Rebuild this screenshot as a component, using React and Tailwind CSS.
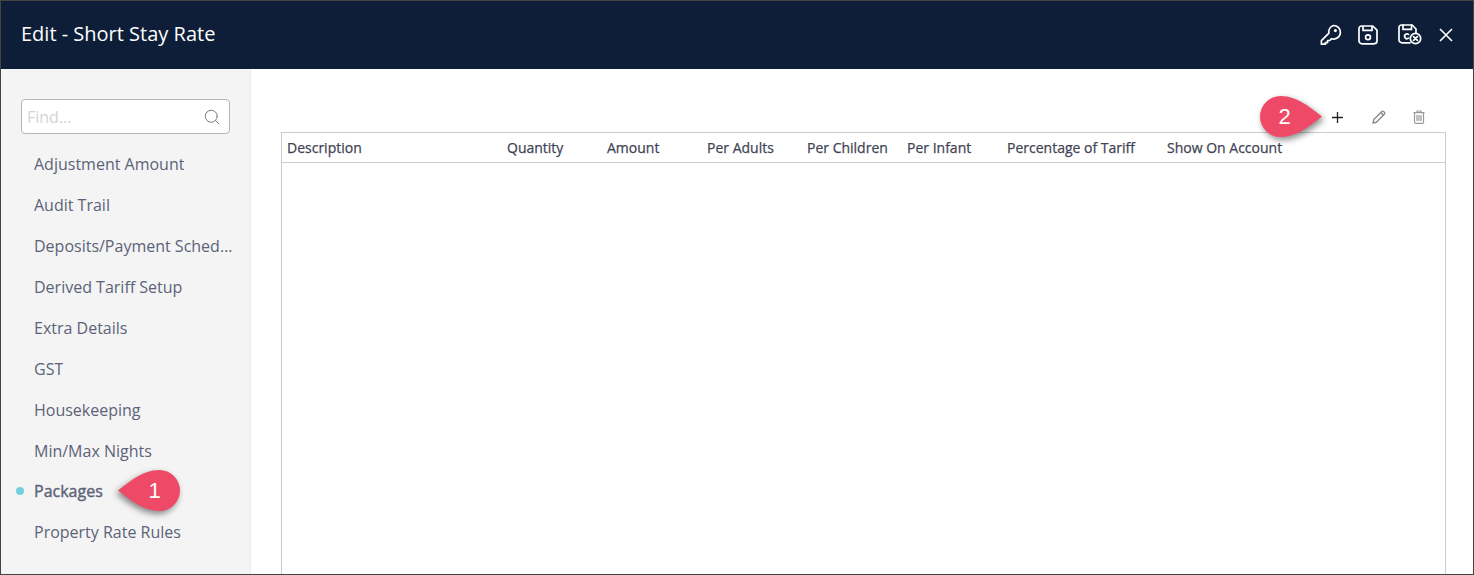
import React from 'react';
import { Search } from 'lucide-react';

const menuItems = [
  'Adjustment Amount',
  'Audit Trail',
  'Deposits/Payment Schedule',
  'Derived Tariff Setup',
  'Extra Details',
  'GST',
  'Housekeeping',
  'Min/Max Nights',
  'Packages',
  'Property Rate Rules',
];

const columns = [
  { label: 'Description', width: 'w-[220px]' },
  { label: 'Quantity', width: 'w-[100px]' },
  { label: 'Amount', width: 'w-[100px]' },
  { label: 'Per Adults', width: 'w-[100px]' },
  { label: 'Per Children', width: 'w-[100px]' },
  { label: 'Per Infant', width: 'w-[100px]' },
  { label: 'Percentage of Tariff', width: 'w-[160px]' },
  { label: 'Show On Account', width: 'w-[200px]' },
];

const KeyIcon = () => (
  <svg width="22" height="22" viewBox="0 0 22 22" fill="none" stroke="currentColor" strokeWidth="1.7" strokeLinejoin="round" strokeLinecap="round">
    <path d="M13.5 1.5a6.8 6.8 0 0 1 6.9 6.8 6.8 6.8 0 0 1-8.9 6.4l-1.7 1.8H7.6v2.1H5.4v1.6H1.4v-3.6l7.5-7.5a6.8 6.8 0 0 1 4.6-7.6z" />
    <circle cx="15.4" cy="6.6" r="0.7" />
  </svg>
);

const SaveIcon = () => (
  <svg width="20" height="20" viewBox="0 0 20 20" fill="none" stroke="currentColor" strokeWidth="1.7" strokeLinejoin="round">
    <path d="M3.5 1h11.2L19 5.2v10.6a3 3 0 0 1-3 3H4a3 3 0 0 1-3-3V3.5A2.5 2.5 0 0 1 3.5 1z" />
    <path d="M5 1v4.4h9V1" />
    <circle cx="10" cy="12.3" r="2.4" />
  </svg>
);

const SaveCloseIcon = () => (
  <svg width="24" height="22" viewBox="0 0 24 22" fill="none" stroke="currentColor" strokeWidth="1.7" strokeLinejoin="round" strokeLinecap="round">
    <path d="M12 18.8H4a3 3 0 0 1-3-3V3.5A2.5 2.5 0 0 1 3.5 1h10.7L18 5v3.5" />
    <path d="M5 1v4.4h8.5V1" />
    <path d="M10.5 10.4a2.4 2.4 0 1 0 0 3.8" />
    <circle cx="17.5" cy="14.5" r="5.2" />
    <path d="M15.6 12.6l3.8 3.8M19.4 12.6l-3.8 3.8" />
  </svg>
);

const CloseIcon = () => (
  <svg width="14" height="14" viewBox="0 0 14 14" fill="none" stroke="currentColor" strokeWidth="1.6">
    <path d="M1 1l12 12M13 1L1 13" />
  </svg>
);

const PencilIcon = () => (
  <svg width="14" height="14" viewBox="0 0 14 14" fill="none" stroke="#8a8a8a" strokeWidth="1.4" strokeLinejoin="round">
    <path d="M1 13l.8-3.4L9.9 1.5a1.2 1.2 0 0 1 1.7 0l.9.9a1.2 1.2 0 0 1 0 1.7L4.4 12.2z" />
    <path d="M8.8 2.6l2.6 2.6" />
  </svg>
);

const TrashIcon = () => (
  <svg width="12" height="14" viewBox="0 0 12 14" fill="none" stroke="#9a9a9a" strokeWidth="1.2" strokeLinejoin="round">
    <path d="M0.5 2.6h11M4 2.6V1h4v1.6" />
    <path d="M1.5 2.6v9.6a1.2 1.2 0 0 0 1.2 1.2h6.6a1.2 1.2 0 0 0 1.2-1.2V2.6" />
    <path d="M4 5v6M6 5v6M8 5v6" />
  </svg>
);

// teardrop marker, tip points right unless flipped
const Callout = ({ number, flip, className }) => (
  <div className={`absolute h-[41px] w-[62px] ${className}`}>
    <svg
      width="62"
      height="41"
      viewBox="0 0 62 41"
      className={`overflow-visible drop-shadow-[2px_3px_3px_rgba(0,0,0,0.45)] ${flip ? '-scale-x-100' : ''}`}
    >
      <path d="M62 20.5C52 13 38 0 20.5 0a20.5 20.5 0 0 0 0 41C38 41 52 28 62 20.5z" fill="#ee4a67" />
    </svg>
    <span className={`absolute top-0 flex h-[41px] w-[41px] items-center justify-center font-['Liberation_Sans',sans-serif] text-[22px] text-white ${flip ? 'right-[5px]' : 'left-[4px]'}`}>
      {number}
    </span>
  </div>
);

export default function App() {
  return (
    <div className="relative flex h-[575px] w-[1474px] flex-col overflow-hidden border border-[#444444] bg-white font-['Open_Sans',sans-serif]">
      {/* header */}
      <header className="flex h-[68px] shrink-0 items-center justify-between bg-[#0e1e38] pl-5 pr-[20px] text-white">
        <h1 className="pb-[2px] text-[20px] font-normal leading-none">Edit - Short Stay Rate</h1>
        <div className="flex items-center">
          <KeyIcon />
          <div className="ml-[16px]"><SaveIcon /></div>
          <div className="ml-[20px]"><SaveCloseIcon /></div>
          <div className="ml-[17px]"><CloseIcon /></div>
        </div>
      </header>

      <div className="flex min-h-0 flex-1">
        {/* sidebar */}
        <aside className="w-[250px] shrink-0 border-r border-[#ebebeb] bg-[#f4f4f4] pl-5 pt-[30px]">
          <div className="flex h-[35px] w-[209px] items-center justify-between rounded border border-[#b5b5b5] bg-white pl-[5px] pr-[8px]">
            <span className="text-base text-[#d4d4d4]">Find...</span>
            <Search size={18} strokeWidth={1.3} className="text-[#757575]" />
          </div>
          <ul className="mt-[9px] w-[212px]">
            {menuItems.map((item) => (
              <li
                key={item}
                className={`relative flex items-center pl-[13px] text-base text-[#5c6378] ${item === 'Packages' ? 'h-[40px]' : 'h-[41px]'}`}
              >
                {item === 'Packages' && (
                  <span className="absolute left-[-5px] top-[16px] h-2 w-2 rounded-full bg-[#74cfdc]"></span>
                )}
                <span className={`truncate ${item === 'Packages' ? 'font-medium [-webkit-text-stroke:0.4px]' : ''}`}>{item}</span>
              </li>
            ))}
          </ul>
        </aside>

        {/* main */}
        <main className="min-w-0 flex-1 pl-[30px] pr-[27px] pt-[34px]">
          <div className="flex h-[29px] items-center justify-end pb-[1px]">
            <span className="mr-[29px] text-[#222222]">
              <svg width="11" height="11" viewBox="0 0 11 11" stroke="currentColor" strokeWidth="1.3"><path d="M5.5 0v11M0 5.5h11" /></svg>
            </span>
            <span className="mr-[27px]"><PencilIcon /></span>
            <span className="mr-[21px]"><TrashIcon /></span>
          </div>
          <div className="h-[600px] border border-[#cccccc]">
            <div className="flex h-[30px] items-center border-b border-[#cccccc]">
              {columns.map((col) => (
                <div key={col.label} className={`${col.width} shrink-0 pl-[5px] text-sm font-medium text-[#3f4454] [-webkit-text-stroke:0.25px]`}>
                  {col.label}
                </div>
              ))}
            </div>
          </div>
        </main>
      </div>

      <Callout number="1" flip className="left-[117px] top-[469px]" />
      <Callout number="2" className="left-[1259px] top-[95px]" />
    </div>
  );
}
